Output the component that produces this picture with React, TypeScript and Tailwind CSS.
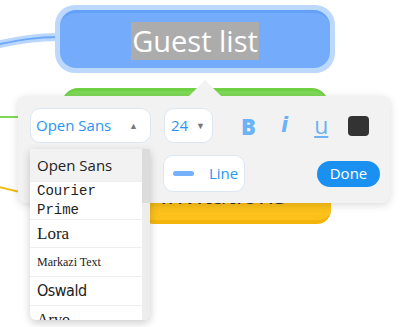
import React from 'react';

const fonts = [
    { name: 'Open Sans', cls: "font-['Open_Sans',sans-serif] text-[15px] h-[32px] bg-[#f2f2f2]" },
    { name: 'Courier Prime', cls: "font-['Liberation_Mono',monospace] text-[14px] leading-[19px] h-[38px] border-t border-[#efefef]" },
    { name: 'Lora', cls: "font-['Liberation_Serif',serif] text-[17px] h-[28px] border-t border-[#efefef]" },
    { name: 'Markazi Text', cls: "font-['Liberation_Serif',serif] text-[12px] h-[29px] border-t border-[#efefef]" },
    { name: 'Oswald', cls: "font-['DejaVu_Sans_Condensed',sans-serif] text-[16px] tracking-[-0.5px] h-[29px] border-t border-[#efefef]" },
    { name: 'Arvo', cls: "font-['Liberation_Serif',serif] text-[16px] h-[29px] border-t border-[#efefef]" },
];

const App: React.FC = () => {
    return (
        <div className="relative w-[400px] h-[327px] overflow-hidden bg-white font-['Open_Sans',sans-serif]">
            {/* connectors */}
            <svg className="absolute inset-0" width="400" height="327">
                <path d="M -5 45 C 20 40, 35 37, 60 37" fill="none" stroke="#b9d7fd" strokeWidth="8" />
                <path d="M -5 45 C 20 40, 35 37, 60 37" fill="none" stroke="#6ea8fb" strokeWidth="2" />
                <path d="M -5 117 L 40 117" fill="none" stroke="#7ed957" strokeWidth="2" />
                <path d="M -5 186 C 10 190, 20 193, 40 193" fill="none" stroke="#f5b90f" strokeWidth="2" />
            </svg>

            {/* main node */}
            <div className="absolute left-[55px] top-[5px] w-[280px] h-[68px] rounded-[20px] bg-[#bcd8fd] p-[5px]">
                <div className="h-full rounded-[16px] bg-[#74abfb] border-t-[3px] border-[#63a0f9] flex items-center justify-center">
                    <span className="bg-[#acacac] text-white text-[29px] leading-[38px] px-[1px]">Guest list</span>
                </div>
            </div>

            {/* green node */}
            <div className="absolute left-[62px] top-[88px] w-[266px] h-[50px] rounded-[16px] bg-[#7ed957] border-t-[3px] border-[#6fd044]" />

            {/* yellow node */}
            <div className="absolute left-[140px] top-[168px] w-[191px] h-[56px] rounded-[14px] bg-[#fcc21b] border-b-[4px] border-[#f3b50c] pl-[20px] pt-[9px]">
                <span className="text-[26px] text-[#333] leading-[34px]">Invitations</span>
            </div>

            {/* toolbar */}
            <div className="absolute left-[18px] top-[96px] w-[372px] h-[107px] rounded-[8px] bg-[#f2f2f2] shadow-[0_2px_8px_rgba(0,0,0,0.15)]">
                <div className="absolute left-[175px] top-[-11px] w-[24px] h-[24px] rotate-45 bg-[#f2f2f2]" />
                <div className="relative flex items-center pl-[12px] pt-[12px]">
                    <div className="w-[121px] h-[35px] rounded-[10px] bg-white border border-[#dbe8f4] flex items-center justify-between pl-[5px] pr-[12px]">
                        <span className="text-[15px] text-[#2b95f0]">Open Sans</span>
                        <span className="text-[9px] text-[#777]">▲</span>
                    </div>
                    <div className="ml-[13px] w-[49px] h-[35px] rounded-[10px] bg-white border border-[#dbe8f4] flex items-center justify-between pl-[6px] pr-[7px]">
                        <span className="text-[15px] text-[#2b95f0]">24</span>
                        <span className="text-[9px] text-[#777]">▼</span>
                    </div>
                    <span className="ml-[28px] w-[14px] text-[22px] font-extrabold text-[#6bb2f6] leading-none">B</span>
                    <span className="ml-[26px] text-[21px] italic font-bold text-[#6bb2f6] leading-none font-['DejaVu_Sans',sans-serif]">i</span>
                    <span className="ml-[26px] text-[23px] underline decoration-[2px] underline-offset-[2px] text-[#6bb2f6] leading-none">u</span>
                    <span className="ml-[20px] w-[21px] h-[20px] rounded-[4px] bg-[#333]" />
                </div>
                <div className="relative flex items-center justify-between pl-[145px] pr-[10px] mt-[12px]">
                    <div className="w-[82px] h-[37px] rounded-[10px] bg-white border border-[#dbe8f4] flex items-center pl-[9px]">
                        <span className="w-[21px] h-[5px] rounded-full bg-[#75b0f8]" />
                        <span className="ml-[15px] text-[15px] text-[#2b95f0]">Line</span>
                    </div>
                    <div className="w-[63px] h-[26px] rounded-full bg-[#1a91f0] flex items-center justify-center text-[15px] text-white">
                        Done
                    </div>
                </div>
            </div>

            {/* font dropdown */}
            <div className="absolute left-[30px] top-[149px] w-[120px] h-[171px] bg-white rounded-b-[6px] shadow-[0_3px_8px_rgba(0,0,0,0.2)] flex overflow-hidden">
                <div className="flex-1 overflow-hidden">
                    {fonts.map((f) => (
                        <div key={f.name} className={`flex items-center pl-[7px] pr-[4px] text-[#222] ${f.cls}`}>
                            {f.name}
                        </div>
                    ))}
                </div>
                <div className="w-[8px] bg-[#ededed]">
                    <div className="h-[54px] bg-[#dcdcdc]" />
                </div>
            </div>
        </div>
    );
};

export default App;
